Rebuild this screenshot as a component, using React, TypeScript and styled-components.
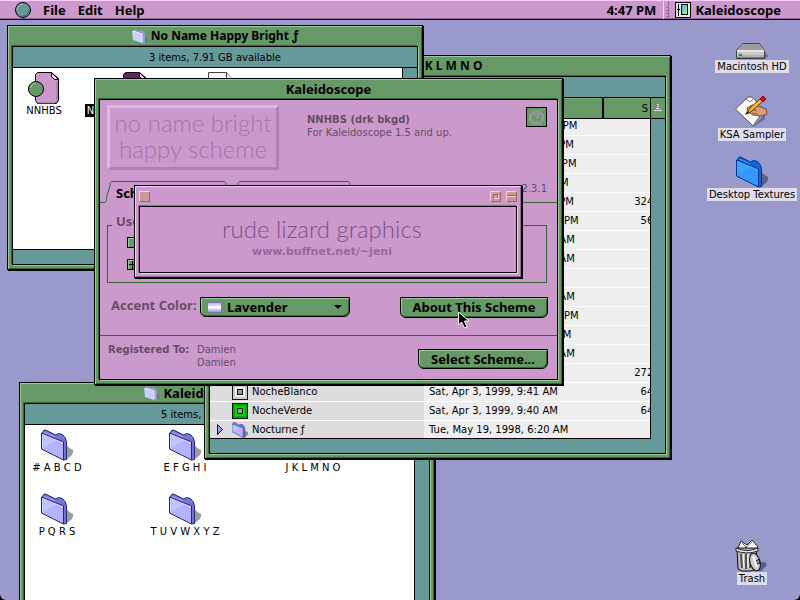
import React from 'react';
import styled, { createGlobalStyle, css } from 'styled-components';

const system = `"Noto Sans", "Open Sans", "DejaVu Sans", sans-serif`;
const geneva = `"DejaVu Sans", "Liberation Sans", sans-serif`;

const GlobalStyle = createGlobalStyle`
  *, *::before, *::after { box-sizing: border-box; }
  html, body, #root { height: 100%; }
  body { margin: 0; background: #000; overflow: hidden; font: 10px/13px ${geneva}; color: #000; }
  button, input, select { margin: 0; padding: 0; font: inherit; color: inherit; border-radius: 0; }
`;

/* ---------- desktop and menu bar ---------- */

const Screen = styled.div`
  display: flex;
  flex-direction: column;
  min-height: 100vh;
  background: #9999cc;
  border-radius: 0 0 6px 6px;
  overflow: hidden;
`;

const MenuBar = styled.header`
  display: flex;
  align-items: center;
  height: 20px;
  padding: 0 19px 0 15px;
  background: #cc99cc;
  border-bottom: 1px solid #000;
  box-shadow: inset 0 1px 0 #ffccff, inset 0 -1px 0 #996699;
  font: bold 13px/18px ${system};
`;

const MenuButton = styled.button`
  border: 0;
  background: none;
  margin-right: 12px;
  display: flex;
`;

const MenuSpace = styled.div`
  flex: 1;
`;

const Grip = styled.i`
  width: 6px;
  height: 18px;
  margin: 0 6px 0 7px;
  border-left: 1px solid #ffccff;
  border-right: 1px solid #996699;
  background: repeating-linear-gradient(#cc99cc 0 2px, #996699 2px 3px) 2px 4px / 2px 12px no-repeat;
`;

const AppButton = styled(MenuButton)`
  align-items: center;
  gap: 4px;
  margin: 0;
`;

const Desktop = styled.main`
  position: relative;
  flex: 1;
`;

const DesktopItem = styled.button<{ $top?: number; $bottom?: number }>`
  position: absolute;
  right: 4px;
  width: 88px;
  ${p => (p.$top !== undefined ? `top: ${p.$top}px;` : `bottom: ${p.$bottom}px;`)}
  display: flex;
  flex-direction: column;
  align-items: center;
  border: 0;
  background: none;
`;

const DesktopLabel = styled.span`
  padding: 0 2px;
  background: #ddddee;
  white-space: nowrap;
`;

/* ---------- windows ---------- */

type Tone = 'green' | 'pink';
const tones = {
  green: { face: '#669966', light: '#99cc99', dark: '#336633' },
  pink: { face: '#cc99cc', light: '#ffccff', dark: '#996699' },
};

const Frame = styled.section<{ $x: number; $y: number; $w: number; $h: number; $tone?: Tone }>`
  position: absolute;
  left: ${p => p.$x}px;
  top: ${p => p.$y}px;
  width: ${p => p.$w}px;
  height: ${p => p.$h}px;
  display: flex;
  flex-direction: column;
  padding: 0 4px 4px;
  border: 1px solid #000;
  ${p => {
    const t = tones[p.$tone ?? 'green'];
    return css`
      background: ${t.face};
      box-shadow: 1px 1px 0 #000, inset 1px 1px 0 ${t.light}, inset -1px -1px 0 ${t.dark};
      --light: ${t.light};
      --dark: ${t.dark};
    `;
  }}
`;

const TitleBar = styled.div<{ $lead?: number }>`
  display: flex;
  flex: none;
  align-items: center;
  justify-content: center;
  gap: 4px;
  height: 20px;
  padding-left: ${p => p.$lead ?? 0}px;
  font: bold 13px/18px ${system};
  white-space: pre;
`;

const Title = styled.h2<{ $small?: boolean }>`
  margin: 0;
  font: inherit;
  ${p => p.$small && 'font-size: 12px;'}
`;

const Pane = styled.div<{ $bg?: string }>`
  flex: 1;
  min-height: 0;
  display: flex;
  flex-direction: column;
  border: 1px solid #000;
  background: ${p => p.$bg ?? '#669999'};
  box-shadow: -1px -1px 0 var(--dark), 1px 1px 0 var(--light);
`;

const InfoBar = styled.div`
  flex: none;
  display: flex;
  align-items: center;
  justify-content: center;
  height: 21px;
  border-bottom: 1px solid #000;
`;

const IconField = styled.div<{ $gap: number; $inset: number }>`
  flex: 1;
  display: grid;
  grid-template-columns: repeat(3, 60px);
  grid-auto-rows: 45px;
  gap: 19px ${p => p.$gap}px;
  margin: 0 14px 14px 0;
  padding: 4px 0 0 ${p => p.$inset}px;
  border-right: 1px solid #000;
  border-bottom: 1px solid #000;
  background: #fff;
`;

const FileItem = styled.button`
  display: flex;
  flex-direction: column;
  align-items: center;
  border: 0;
  background: none;
  white-space: pre;
`;

const FileLabel = styled.span<{ $on?: boolean }>`
  padding: 0 2px;
  ${p => p.$on && 'background: #000; color: #fff;'}
`;

const WindowBox = styled.button`
  width: 11px;
  height: 11px;
  display: flex;
  border: 1px solid;
  border-color: #ffcccc #996666 #996666 #ffcccc;
  background: #cc9999;
`;

const BoxGroup = styled.div`
  display: flex;
  gap: 5px;
`;

const ToolTitleBar = styled(TitleBar)`
  justify-content: space-between;
`;

/* ---------- list window ---------- */

const Track = styled.div`
  flex: 1;
  min-height: 0;
  display: flex;
  padding: 0 14px 14px 0;
`;

const ListArea = styled.div`
  flex: 1;
  min-width: 0;
  overflow: hidden;
  border-right: 1px solid #000;
  border-bottom: 1px solid #000;
  background: #eee;
`;

const ListHeader = styled.div`
  display: flex;
  flex: none;
  height: 21px;
  border-bottom: 1px solid #000;
  background: #669966;
  line-height: 19px;
`;

const HeaderCell = styled.button<{ $w?: number }>`
  ${p => (p.$w ? `width: ${p.$w}px;` : 'flex: 1;')}
  border: 0;
  border-right: 2px solid #000;
  background: none;
  box-shadow: inset 0 1px 0 #77aa77;
  text-align: left;
  padding-left: 5px;
`;

const SizeHeader = styled(HeaderCell)`
  text-align: right;
  padding-right: 2px;
  border-right-width: 1px;
`;

const SortCell = styled.button`
  width: 14px;
  border: 0;
  background: none;
  display: flex;
  align-items: center;
  justify-content: center;
`;

const Table = styled.table`
  width: 100%;
  margin-top: -3px;
  border-collapse: collapse;
  table-layout: fixed;
  white-space: nowrap;
`;

const Cell = styled.td<{ $name?: boolean }>`
  height: 19px;
  padding: 0 0 0 5px;
  border-bottom: 1px solid #fff;
  overflow: hidden;
  ${p => p.$name && 'background: #ddd;'}
`;

const SizeText = styled.div`
  margin-right: -13px;
  text-align: right;
`;

const NameLine = styled.div`
  display: flex;
  align-items: center;
  gap: 4px;
  height: 18px;
`;

const Twist = styled.span`
  display: flex;
  width: 13px;
`;

/* ---------- Kaleidoscope dialog ---------- */

const DialogHead = styled.div`
  display: flex;
  align-items: flex-start;
  padding: 5px 10px 0 7px;
`;

const SchemeLogo = styled.div`
  flex: none;
  width: 172px;
  height: 65px;
  padding-top: 2px;
  border: 3px solid;
  border-color: #e6b3e6 #b280b2 #b280b2 #e6b3e6;
  color: #a673a6;
  text-align: center;
  white-space: nowrap;
  font: 300 24px/26px Lato, ${system};
`;

const SchemeText = styled.div`
  flex: 1;
  padding: 8px 0 0 28px;
  color: #664d66;
`;

const HelpButton = styled.button`
  width: 21px;
  height: 20px;
  margin-top: 2px;
  display: flex;
  align-items: center;
  justify-content: center;
  border: 1px solid #000;
  background: #669966;
`;

const Tabs = styled.div`
  display: flex;
  height: 22px;
  margin-top: 11px;
`;

const Tab = styled.button<{ $on?: boolean; $w: number }>`
  width: ${p => p.$w}px;
  border: 0;
  border-top: 1px solid #336633;
  border-bottom: ${p => (p.$on ? 0 : '1px solid #336633')};
  background: none;
  padding-left: 4px;
  text-align: left;
  font: bold 13px/18px ${system};
  color: ${p => (p.$on ? '#000' : '#664d66')};
`;

const TabStart = styled.div`
  width: 4px;
  border-bottom: 1px solid #336633;
`;

const TabRest = styled.div`
  flex: 1;
  border-bottom: 1px solid #336633;
  padding: 1px 10px 0 0;
  text-align: right;
  color: #664d66;
`;

const Group = styled.fieldset`
  display: block;
  min-width: 0;
  height: 68px;
  margin: 12px 10px 0 7px;
  padding: 2px 0 0 19px;
  border: 1px solid #336633;
`;

const Legend = styled.legend`
  height: 20px;
  margin-left: -15px;
  padding: 0 4px;
  font: bold 13px/13px ${system};
  color: #664d66;
`;

const CheckLine = styled.label`
  display: flex;
  align-items: center;
  gap: 8px;
  height: 11px;
  margin-bottom: 11px;
  font: bold 13px/11px ${system};
`;

const Check = styled.input`
  appearance: none;
  width: 11px;
  height: 11px;
  border: 1px solid #000;
  background: #669966;
  box-shadow: inset 1px 1px 0 #99cc99;
  &:checked {
    background:
      linear-gradient(#000, #000) 4px 1px / 1px 8px no-repeat,
      linear-gradient(#000, #000) 1px 4px / 8px 1px no-repeat,
      #669966;
  }
`;

const ActionLine = styled.div`
  display: flex;
  align-items: flex-start;
  height: 21px;
  margin-top: 14px;
  padding: 0 9px 0 11px;
`;

const AccentLabel = styled.label`
  width: 89px;
  font: bold 13px/17px ${system};
  color: #664d66;
  white-space: nowrap;
`;

const raised = css`
  border: 1px solid #000;
  border-radius: 0 0 6px 6px;
  background: #669966;
  box-shadow: inset 1px 1px 0 #99cc99, inset -1px -1px 0 #336633;
  font: bold 13px/18px ${system};
`;

const Popup = styled.div`
  position: relative;
  width: 150px;
`;

const PopupSelect = styled.select`
  ${raised}
  display: block;
  appearance: none;
  width: 100%;
  height: 20px;
  padding: 0 0 1px 26px;
`;

const Swatch = styled.i`
  position: absolute;
  left: 7px;
  top: 5px;
  width: 15px;
  height: 11px;
  pointer-events: none;
  border: 1px solid #7777aa;
  background: linear-gradient(#b3b3e6, #fff 50%, #9999cc);
`;

const PopupArrow = styled.i`
  position: absolute;
  right: 8px;
  top: 8px;
  pointer-events: none;
  border: 4px solid transparent;
  border-top-color: #000;
  border-bottom: 0;
`;

const Push = styled.button<{ $w: number }>`
  ${raised}
  width: ${p => p.$w}px;
  height: 21px;
  margin-left: auto;
  padding-bottom: 2px;
  white-space: nowrap;
`;

const Footer = styled.div`
  display: flex;
  align-items: flex-start;
  flex: 1;
  margin-top: 17px;
  padding: 7px 9px 0 8px;
  border-top: 1px solid #336633;
  color: #664d66;
`;

const RegisteredTo = styled.strong`
  width: 89px;
`;

const FooterPush = styled(Push)`
  height: 20px;
  margin-top: 6px;
  color: #000;
`;

const Credits = styled.div`
  flex: 1;
  display: flex;
  flex-direction: column;
  align-items: center;
  padding: 6px 12px 0 0;
  color: #996699;
`;

const CreditsLogo = styled.div`
  font: 300 24px/32px Lato, ${system};
  color: #805080;
`;

const CreditsLink = styled.a`
  color: inherit;
  font-weight: bold;
  font-size: 11px;
  text-decoration: none;
`;

const Pointer = styled.svg`
  position: absolute;
  left: 458px;
  top: 291px;
  pointer-events: none;
`;

/* ---------- drawings ---------- */

const folderTones = {
  lavender: { front: '#b3b3ff', hi: '#d6d6ff', back: '#7373d9', line: '#26266b' },
  blue: { front: '#3399ff', hi: '#55aaff', back: '#1166dd', line: '#003388' },
};

const Folder = ({ size = 32, tone = 'lavender' }: { size?: number; tone?: 'lavender' | 'blue' }) => {
  const t = folderTones[tone];
  return (
    <svg width={size} height={size} viewBox="0 0 32 32" aria-hidden>
      <path d="M26 17l4 3 3 1-2 5-6 5z" fill="#000" opacity=".38" />
      <path d="M1.500 4l1-2.500 2-.5 10 5 3-1.500 4 1 2.500 3 1.500 4v18l-3 .5z" fill={t.back} stroke={t.line} />
      <path d="M3 3l11 5" fill="none" stroke={t.front} />
      <path d="M.5 4l22 9v18L.5 20z" fill={t.front} stroke={t.line} />
      <path d="M1.500 19V5.500L22 14" fill="none" stroke={t.hi} />
      <path d="M3 7l12 5-12 6z" fill={t.hi} opacity=".45" />
    </svg>
  );
};

const PaleFolder = () => (
  <svg width="15" height="16" viewBox="0 0 15 16" aria-hidden>
    <path d="M12 9l3 1v3l-3 2z" fill="#557f66" />
    <path d="M1 2l3-1 3 2 3-1 3 3v10l-2 1z" fill="#9a9ad2" />
    <path d="M0 3l10 3v9L1 12z" fill="#ccccff" />
    <path d="M1 3l9 3v8" fill="none" stroke="#eeeeff" />
  </svg>
);

const SuitcaseFile = ({ page, knob }: { page: string; knob: string }) => (
  <svg width="32" height="32" viewBox="0 0 32 32" aria-hidden>
    <path d="M9.500.5h14l7 6v22l-2 3h-19l-2-3v-26z" fill={page} stroke="#000" />
    <path d="M29 9v20l-2 2H10" fill="none" stroke="#996699" />
    <path d="M23.500.5v4l3 3h4z" fill="#ffccff" stroke="#000" />
    <circle cx="8" cy="17" r="7.500" fill={knob} stroke="#000" />
    <path d="M3 16a5 5 0 0 1 5-5" fill="none" stroke="#99cc99" />
  </svg>
);

const BlankFile = () => (
  <svg width="32" height="32" viewBox="0 0 32 32" aria-hidden>
    <path d="M4.500.5h18l6 7v24h-24z" fill="#f4f4f4" stroke="#444" />
    <path d="M22.500.5v7h6" fill="#fff" stroke="#444" />
  </svg>
);

const HardDisk = () => (
  <svg width="32" height="32" viewBox="0 0 32 32" aria-hidden>
    <path d="M29 24l3 4-3 3H4z" fill="#666699" />
    <path d="M6.500 15.500h17l5 7v8h-28v-8z" fill="#c8c8c8" stroke="#444" />
    <path d="M7 16h16l5 6H2z" fill="#9c9c9c" />
    <path d="M1 23h27" stroke="#fff" />
    <path d="M1 28h27" stroke="#999" />
    <path d="M1 30h28" stroke="#333" />
    <rect x="3" y="26" width="2" height="2" fill="#0a0" />
    <rect x="5" y="26" width="1" height="2" fill="#c33" />
  </svg>
);

const Sampler = () => (
  <svg width="34" height="32" viewBox="0 0 34 32" aria-hidden>
    <path d="M18 31L30 18v5z" fill="#666699" />
    <path d="M.5 13L13 1h4l12 13-11 16z" fill="#fff" stroke="#555" />
    <path d="M11 3l4 3 4-4" fill="none" stroke="#777" />
    <path d="M12 12l5-3 6 1 8 3 1 5-6 2-8-1-5-3z" fill="#dba079" stroke="#7c4a2c" />
    <path d="M16 13l6 2m-5 2l6 1" stroke="#8f5a3a" />
    <path d="M12 18l3-6L26 2l3 2-12 11z" fill="#ffbb33" stroke="#553300" />
    <path d="M25 3l3-3 3 3-3 3z" fill="#e01030" stroke="#700" />
    <path d="M10 19l2-4 2 2z" fill="#222" />
  </svg>
);

const TrashCan = () => (
  <svg width="36" height="32" viewBox="0 0 36 32" aria-hidden>
    <path d="M22 23l9-1 2 3-6 6h-9z" fill="#333366" opacity=".6" />
    <path d="M4 8l3-7 6 4 5-5 6 7-3 3H5z" fill="#fff" stroke="#222" />
    <path d="M8 3l6 6m-3-1l7-6" stroke="#666" />
    <path d="M3 8h20l-2 21-4 2H8l-4-2z" fill="#bbb" stroke="#111" />
    <path d="M2 8q11 5 22 0v3q-11 4-22 0z" fill="#e8e8e8" stroke="#222" />
    <path d="M7 14l1 14m4-14v15m5-15l-1 14" stroke="#555" strokeWidth="2" />
    <path d="M9 14l1 14m4-14v14" stroke="#fff" />
    <ellipse cx="21" cy="22" rx="5" ry="9" transform="rotate(-16 21 22)" fill="#ccc" stroke="#111" />
    <path d="M19 16l4 11" stroke="#fff" strokeWidth="2" />
    <path d="M22 21l3-2 1 4-3 1" fill="#999" stroke="#111" />
  </svg>
);

const SchemeIcon = ({ face, edge }: { face: string; edge: string }) => (
  <svg width="16" height="16" viewBox="0 0 16 16" shapeRendering="crispEdges" aria-hidden>
    <rect width="16" height="16" fill="#111" />
    <rect x="1" y="1" width="14" height="14" fill={edge} />
    <rect x="3" y="3" width="10" height="10" fill={face} />
    <rect x="5" y="5" width="6" height="6" fill="#111" />
    <rect x="6" y="6" width="4" height="4" fill="#999" />
  </svg>
);

const AppIcon = () => (
  <svg width="16" height="16" viewBox="0 0 16 16" aria-hidden>
    <defs>
      <linearGradient id="spectrum" x1="0" y1="0" x2="1" y2="1">
        <stop offset="0" stopColor="#cc77ff" />
        <stop offset=".35" stopColor="#66bbff" />
        <stop offset=".65" stopColor="#77ee88" />
        <stop offset="1" stopColor="#ffee66" />
      </linearGradient>
    </defs>
    <rect x=".5" y=".5" width="15" height="15" fill="#ddeedd" stroke="#000" />
    <rect x="6.500" y="2.500" width="6" height="10" fill="url(#spectrum)" stroke="#000" />
    <path d="M3.500 2v12M2 7.500h3" stroke="#000" />
  </svg>
);

const AppleDot = () => (
  <svg width="16" height="16" viewBox="0 0 16 16" aria-hidden>
    <circle cx="8" cy="8" r="7.500" fill="#669999" stroke="#000" />
    <path d="M2 8a6 6 0 0 1 6-6" fill="none" stroke="#99cccc" />
    <path d="M14 8a6 6 0 0 1-6 6" fill="none" stroke="#336666" />
  </svg>
);

const Slope = ({ d, line }: { d: string; line?: boolean }) => (
  <svg width="8" height="22" viewBox="0 0 8 22" fill="none" stroke="#336633" aria-hidden>
    <path d={d} />
    {line && <path d="M0 21.500h8" />}
  </svg>
);
const rise = 'M0 21.500c3 0 2-3 3-7l3-10c0-3 1-4 2-4';
const fall = 'M0 .5c1 0 2 1 2 4l3 10c1 4 0 7 3 7';

const HelpMark = () => (
  <svg width="17" height="17" viewBox="0 0 17 17" fill="none" stroke="#999999" aria-hidden>
    <path d="M3 1.500h3M11 1.500h3M3 15.500h3M11 15.500h3M1.500 5v7M15.500 5v7" />
    <circle cx="8.500" cy="8.500" r="6" strokeWidth="2" />
    <path d="M6.500 7q0-2 2-2t2 2-2 2.500M8.500 11v1" strokeWidth="2" />
  </svg>
);

/* ---------- data ---------- */

type Row = { date: string; size?: string; name?: string; icon?: React.ReactNode; folder?: boolean };

const rows: Row[] = [
  { date: 'Wed, Nov 11, 1998, 11:41 PM' },
  { date: 'Sun, Mar 14, 1999, 10:12 PM' },
  { date: 'Mon, Dec 14, 1998, 10:36 PM' },
  { date: 'Fri, May 22, 1998, 10:05 PM' },
  { date: 'Tue, May 19, 1998, 11:20 PM', size: '324 K' },
  { date: 'Wed, May 20, 1998, 12:20 PM', size: '56 K' },
  { date: 'Sun, Mar 21, 1999, 11:30 AM' },
  { date: 'Sun, Mar 21, 1999, 10:44 AM' },
  { date: 'Fri, Apr 2, 1999, 9:18 AM' },
  { date: 'Sun, Mar 28, 1999, 10:02 AM' },
  { date: 'Wed, May 27, 1998, 10:20 PM' },
  { date: 'Sat, Mar 27, 1999, 10:15 PM' },
  { date: 'Sun, Mar 28, 1999, 10:51 AM' },
  { date: 'Fri, Apr 2, 1999, 9:44 AM', size: '272 K' },
  { date: 'Sat, Apr 3, 1999, 9:41 AM', size: '64 K', name: 'NocheBlanco', icon: <SchemeIcon face="#eee" edge="#ccc" /> },
  { date: 'Sat, Apr 3, 1999, 9:40 AM', size: '64 K', name: 'NocheVerde', icon: <SchemeIcon face="#00dd00" edge="#00aa00" /> },
  { date: 'Tue, May 19, 1998, 6:20 AM', name: 'Nocturne ƒ', icon: <Folder size={16} />, folder: true },
];

const folders = ['# A B C D', 'E F G H I', 'J K L M N O', 'P Q R S', 'T U V W X Y Z'];

export default function App() {
  return (
    <>
      <GlobalStyle />
      <Screen>
        <MenuBar>
          <MenuButton aria-label="Apple menu"><AppleDot /></MenuButton>
          <MenuButton>File</MenuButton>
          <MenuButton>Edit</MenuButton>
          <MenuButton>Help</MenuButton>
          <MenuSpace />
          <span>4:47 PM</span>
          <Grip />
          <AppButton><AppIcon />Kaleidoscope</AppButton>
        </MenuBar>

        <Desktop>
          <DesktopItem $top={8}><HardDisk /><DesktopLabel>Macintosh HD</DesktopLabel></DesktopItem>
          <DesktopItem $top={76}><Sampler /><DesktopLabel>KSA Sampler</DesktopLabel></DesktopItem>
          <DesktopItem $top={136}><Folder tone="blue" /><DesktopLabel>Desktop Textures</DesktopLabel></DesktopItem>
          <DesktopItem $bottom={15}><TrashCan /><DesktopLabel>Trash</DesktopLabel></DesktopItem>

          <Frame $x={19} $y={362} $w={416} $h={246}>
            <TitleBar><PaleFolder /><Title>Kaleidoscope Schemes</Title></TitleBar>
            <Pane>
              <InfoBar>5 items, 7.91 GB available</InfoBar>
              <IconField $gap={68} $inset={2}>
                {folders.map(name => (
                  <FileItem key={name}><Folder /><FileLabel>{name}</FileLabel></FileItem>
                ))}
              </IconField>
            </Pane>
          </Frame>

          <Frame $x={204} $y={35} $w={467} $h={404}>
            <TitleBar $lead={6}><PaleFolder /><Title $small>J K L M N O</Title></TitleBar>
            <Pane>
              <InfoBar />
              <ListHeader>
                <HeaderCell>Name</HeaderCell>
                <HeaderCell $w={180}>Date Modified</HeaderCell>
                <SizeHeader $w={47}>S</SizeHeader>
                <SortCell aria-label="Sort order">
                  <svg width="8" height="8" viewBox="0 0 8 8" shapeRendering="crispEdges" aria-hidden>
                    <path d="M3 .5h2M3 2.500h2M2 4.500h4M0 6.500h8" stroke="#e8d8e8" />
                  </svg>
                </SortCell>
              </ListHeader>
              <Track>
                <ListArea>
                  <Table>
                    <colgroup><col /><col width="180" /><col width="46" /></colgroup>
                    <tbody>
                      {rows.map((r, i) => (
                        <tr key={i}>
                          <Cell $name>
                            <NameLine>
                              <Twist>
                                {r.folder && (
                                  <svg width="10" height="11" viewBox="0 0 10 11" aria-hidden>
                                    <path d="M2.500.5v10l5-5z" fill="#9999ff" stroke="#000044" />
                                  </svg>
                                )}
                              </Twist>
                              {r.icon}
                              {r.name}
                            </NameLine>
                          </Cell>
                          <Cell>{r.date}</Cell>
                          <Cell><SizeText>{r.size}</SizeText></Cell>
                        </tr>
                      ))}
                    </tbody>
                  </Table>
                </ListArea>
              </Track>
            </Pane>
          </Frame>

          <Frame $x={7} $y={5} $w={416} $h={245}>
            <TitleBar><PaleFolder /><Title $small>No Name Happy Bright ƒ</Title></TitleBar>
            <Pane>
              <InfoBar>3 items, 7.91 GB available</InfoBar>
              <IconField $gap={28} $inset={1}>
                <FileItem><SuitcaseFile page="#cc99cc" knob="#669966" /><FileLabel>NNHBS</FileLabel></FileItem>
                <FileItem><SuitcaseFile page="#662266" knob="#336633" /><FileLabel $on>NNHBS (drk bkgd)</FileLabel></FileItem>
                <FileItem><BlankFile /><FileLabel>Read Me</FileLabel></FileItem>
              </IconField>
            </Pane>
          </Frame>

          <Frame $x={94} $y={58} $w={469} $h={307}>
            <TitleBar><Title>Kaleidoscope</Title></TitleBar>
            <Pane $bg="#cc99cc">
              <DialogHead>
                <SchemeLogo>no name bright<br />happy scheme</SchemeLogo>
                <SchemeText><strong>NNHBS (drk bkgd)</strong><br />For Kaleidoscope 1.5 and up.</SchemeText>
                <HelpButton aria-label="Help"><HelpMark /></HelpButton>
              </DialogHead>
              <Tabs>
                <TabStart />
                <Slope d={rise} />
                <Tab $on $w={112}>Schemes</Tab>
                <Slope d={fall} />
                <Slope d={rise} line />
                <Tab $w={108}>Options</Tab>
                <Slope d={fall} line />
                <TabRest>v2.3.1</TabRest>
              </Tabs>
              <Group>
                <Legend>Use Scheme’s:</Legend>
                <CheckLine><Check type="checkbox" />Desktop pattern</CheckLine>
                <CheckLine><Check type="checkbox" defaultChecked />Accent color</CheckLine>
              </Group>
              <ActionLine>
                <AccentLabel htmlFor="accent">Accent Color:</AccentLabel>
                <Popup>
                  <PopupSelect id="accent"><option>Lavender</option></PopupSelect>
                  <Swatch />
                  <PopupArrow />
                </Popup>
                <Push $w={148}>About This Scheme</Push>
              </ActionLine>
              <Footer>
                <RegisteredTo>Registered To:</RegisteredTo>
                <div>Damien<br />Damien</div>
                <FooterPush $w={130}>Select Scheme...</FooterPush>
              </Footer>
            </Pane>
          </Frame>

          <Frame $x={134} $y={165} $w={388} $h={93} $tone="pink">
            <ToolTitleBar>
              <WindowBox aria-label="Close" />
              <BoxGroup>
                <WindowBox aria-label="Zoom">
                  <svg width="9" height="9" viewBox="0 0 9 9" shapeRendering="crispEdges" aria-hidden>
                    <rect x="2.500" y="2.500" width="4" height="4" fill="#cc99cc" stroke="#996666" />
                    <path d="M3 6.500h4V3" fill="none" stroke="#ffcccc" />
                  </svg>
                </WindowBox>
                <WindowBox aria-label="Collapse">
                  <svg width="9" height="9" viewBox="0 0 9 9" shapeRendering="crispEdges" aria-hidden>
                    <path d="M0 3.500h9" stroke="#996666" />
                    <path d="M0 4.500h9" stroke="#ffcccc" />
                  </svg>
                </WindowBox>
              </BoxGroup>
            </ToolTitleBar>
            <Pane $bg="#cc99cc">
              <Credits>
                <CreditsLogo>rude lizard graphics</CreditsLogo>
                <CreditsLink href="#">www.buffnet.net/~jeni</CreditsLink>
              </Credits>
            </Pane>
          </Frame>

          <Pointer width="12" height="18" viewBox="0 0 12 18" aria-hidden>
            <path d="M.5 1v13l3-3 3 6 2.500-1-2.500-6h4.500z" fill="#000" stroke="#fff" />
          </Pointer>
        </Desktop>
      </Screen>
    </>
  );
}
